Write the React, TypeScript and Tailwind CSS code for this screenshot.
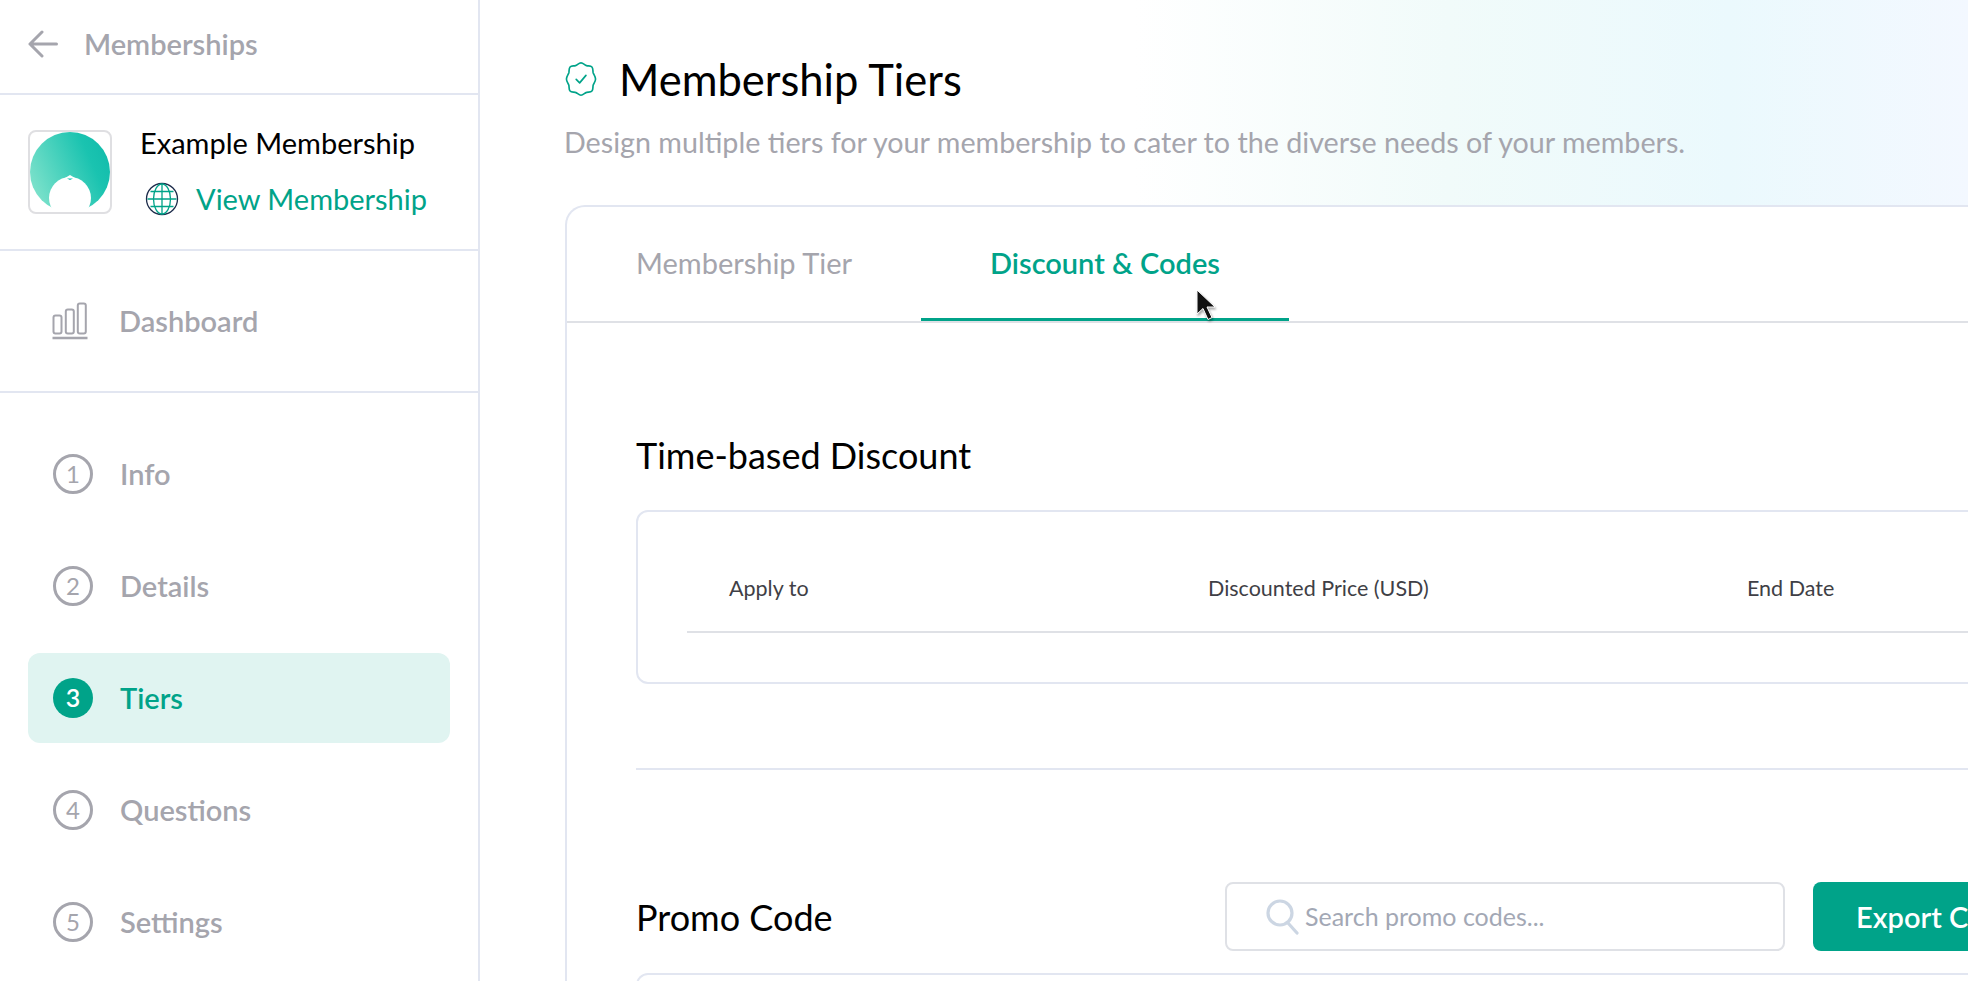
import React from "react";

const steps = [
  { n: 1, label: "Info" },
  { n: 2, label: "Details" },
  { n: 3, label: "Tiers", active: true },
  { n: 4, label: "Questions" },
  { n: 5, label: "Settings" },
];

function Logo() {
  return (
    <div className="w-[84px] h-[84px] rounded-[8px] border-2 border-[#dfdfe2] overflow-hidden shrink-0 bg-white">
      <svg viewBox="0 0 80 80" width="80" height="80">
        <defs>
          <linearGradient id="lg" x1="0" y1="0.8" x2="1" y2="0.35">
            <stop offset="0" stopColor="#84e4cd" />
            <stop offset="0.8" stopColor="#1ac3b0" />
            <stop offset="1" stopColor="#13bdac" />
          </linearGradient>
        </defs>
        <circle cx="40" cy="40" r="40" fill="url(#lg)" />
        <circle cx="40" cy="66" r="21" fill="#fff" />
        <path d="M35 46 L40 43 L45 46 Z" fill="#fff" />
        <path d="M37 46.500 H43 L40 48 Z" fill="#17c1af" />
      </svg>
    </div>
  );
}

function Globe() {
  return (
    <svg width="34" height="34" viewBox="0 0 34 34" fill="none" className="shrink-0">
      <circle cx="17" cy="17" r="15.500" stroke="#1c2b4a" strokeWidth="1.300" />
      <ellipse cx="17" cy="17" rx="8.500" ry="15" stroke="#00a389" strokeWidth="1.300" />
      <path d="M17 2v30M2.500 17h29M5.500 9.500h23M5.500 24.500h23" stroke="#00a389" strokeWidth="1.300" />
    </svg>
  );
}

function Bars() {
  return (
    <svg width="36" height="38" viewBox="0 0 36 38" fill="none" stroke="#a5a5ad" strokeWidth="2" className="shrink-0">
      <rect x="1.500" y="13.500" width="8" height="18" rx="2" />
      <rect x="13.800" y="7.500" width="8" height="24" rx="2" />
      <rect x="25.800" y="1.500" width="8" height="30" rx="2" />
      <path d="M0.500 36h35" strokeWidth="2.400" />
    </svg>
  );
}

function Badge() {
  return (
    <svg width="36" height="36" viewBox="0 0 24 24" fill="none" stroke="#00a389" strokeWidth="1.100" strokeLinejoin="round" strokeLinecap="round" className="shrink-0">
      <path d="M12 1.200c1.500 0 2.400 1.500 3.700 1.900 1.200.4 2.700-.1 3.600.9.900 1 .5 2.500.8 3.800.4 1.300 1.600 2.500 1.600 4.200s-1.200 2.900-1.600 4.200c-.3 1.300.1 2.800-.8 3.800-.9 1-2.400.5-3.600.9-1.300.4-2.200 1.900-3.700 1.900s-2.400-1.500-3.700-1.900c-1.200-.4-2.700.1-3.600-.9-.9-1-.5-2.500-.8-3.800C3.500 14.900 2.300 13.700 2.300 12s1.200-2.900 1.600-4.200c.3-1.300-.1-2.800.8-3.800.9-1 2.400-.5 3.600-.9C9.600 2.700 10.500 1.200 12 1.200z" />
      <path d="M8.800 12.300l2.300 2.300 4.200-5" />
    </svg>
  );
}

function BackArrow() {
  return (
    <svg width="30" height="28" viewBox="0 0 30 28" fill="none" stroke="#a5a5ad" strokeWidth="3" strokeLinecap="round" strokeLinejoin="round" className="shrink-0">
      <path d="M28.500 14H2M14 2L2 14l12 12" />
    </svg>
  );
}

function SearchGlyph() {
  return (
    <svg width="33" height="36" viewBox="0 0 33 36" fill="none" stroke="#ccd6e3" strokeWidth="3.200" strokeLinecap="round" className="shrink-0">
      <circle cx="14" cy="14" r="12" />
      <path d="M22 24l9 10" />
    </svg>
  );
}

function Cursor() {
  return (
    <svg width="24" height="36" viewBox="0 0 24 36" className="absolute left-[1195px] top-[289px] z-10 drop-shadow-[1px_2px_1px_rgba(0,0,0,0.35)]">
      <path d="M2 1v24l6-5.500 5 11 4-2-5-10.500h8z" fill="#111" stroke="#fff" strokeWidth="1" />
    </svg>
  );
}

export default function App() {
  return (
    <div className="relative flex h-[981px] w-[1968px] overflow-hidden bg-white font-['Lato',sans-serif]">
      <aside className="w-[480px] shrink-0 border-r-2 border-[#e2e6f1] flex flex-col">
        <div className="h-[95px] shrink-0 border-b-2 border-[#e2e6f1] flex items-center pl-[28px] gap-[26px] pb-[5px] text-[#a5a5ad]">
          <BackArrow />
          <span className="text-[29px] font-semibold">Memberships</span>
        </div>
        <div className="h-[156px] shrink-0 border-b-2 border-[#e2e6f1] flex items-center pl-[28px] gap-[28px]">
          <Logo />
          <div className="flex flex-col gap-[16px] -mt-[2px]">
            <span className="text-[29px] leading-[40px] text-black">Example Membership</span>
            <div className="flex items-center gap-[17px] pl-[5px]">
              <Globe />
              <span className="text-[29px] leading-[40px] text-[#00a389]">View Membership</span>
            </div>
          </div>
        </div>
        <div className="h-[142px] shrink-0 border-b-2 border-[#e2e6f1] flex items-center pl-[52px] gap-[31px]">
          <Bars />
          <span className="text-[29px] font-semibold text-[#a5a5ad]">Dashboard</span>
        </div>
        <nav className="flex flex-col pt-[36px] pl-[28px] pr-[28px] gap-[22px]">
          {steps.map((s) =>
            s.active ? (
              <div key={s.n} className="h-[90px] rounded-[12px] bg-[#e0f4f1] flex items-center pl-[25px] gap-[27px]">
                <span className="w-[40px] h-[40px] rounded-full bg-[#00a389] text-white flex items-center justify-center text-[25px] font-semibold">{s.n}</span>
                <span className="text-[29px] font-semibold text-[#00a389]">{s.label}</span>
              </div>
            ) : (
              <div key={s.n} className="h-[90px] flex items-center pl-[25px] gap-[27px]">
                <span className="w-[40px] h-[40px] rounded-full border-[3px] border-[#a5a5ad] text-[#a5a5ad] flex items-center justify-center text-[24px]">{s.n}</span>
                <span className="text-[29px] font-semibold text-[#a5a5ad]">{s.label}</span>
              </div>
            )
          )}
        </nav>
      </aside>

      <main className="flex-1 min-w-0 overflow-hidden flex flex-col bg-[linear-gradient(90deg,#ffffff_0%,#ffffff_44%,#f1fbfa_65%,#ebf9fd_84%,#f3f8ff_100%)]">
        <header className="h-[205px] shrink-0 pl-[83px]">
          <div className="flex items-center gap-[20px] pt-[54px]">
            <Badge />
            <h1 className="text-[43.500px] leading-[50px] font-normal text-black">Membership Tiers</h1>
          </div>
          <p className="mt-[21px] ml-[1px] text-[28.700px] leading-[34px] text-[#a5a5ad] whitespace-nowrap">Design multiple tiers for your membership to cater to the diverse needs of your members.</p>
        </header>

        <section className="flex-1 ml-[85px] w-[1600px] bg-white border-2 border-b-0 border-[#e2e6f1] rounded-t-[20px]">
          <div className="h-[116px] border-b-2 border-[#dfe1e6] flex pl-[69px]">
            <div className="w-[285px] flex items-center pb-[2px] text-[29px] text-[#a5a5ad]">Membership Tier</div>
            <div className="w-[368px] flex items-center justify-center border-b-[3px] border-[#00a389] text-[29px] font-semibold text-[#00a389]">Discount &amp; Codes</div>
          </div>

          <div className="pl-[69px] pr-[40px]">
            <h2 className="mt-[110px] text-[36px] leading-[44px] font-normal text-black">Time-based Discount</h2>
            <div className="mt-[33px] h-[174px] rounded-[12px] border-2 border-[#e2e6f1] pl-[49px] pt-[60px]">
              <div className="h-[61px] border-b-2 border-[#dfe1e6] grid grid-cols-[479px_539px_1fr] pl-[42px] text-[21.500px] text-[#3f3f46]">
                <span>Apply to</span>
                <span>Discounted Price (USD)</span>
                <span>End Date</span>
              </div>
            </div>
            <div className="mt-[84px] border-t-2 border-[#e2e6f1]" />
            <div className="mt-[112px] flex items-center justify-between">
              <h2 className="text-[36px] leading-[44px] font-normal text-black">Promo Code</h2>
              <div className="flex items-center gap-[28px]">
                <div className="w-[560px] h-[69px] rounded-[8px] border-2 border-[#dfe1e6] flex items-center pl-[39px] gap-[6px]">
                  <SearchGlyph />
                  <span className="text-[25px] text-[#a3a8b5]">Search promo codes...</span>
                </div>
                <div className="w-[310px] h-[69px] rounded-[8px] bg-[#00a389] flex items-center pl-[43px] text-[29px] font-semibold text-white whitespace-nowrap">Export Codes</div>
              </div>
            </div>
            <div className="mt-[22px] h-[40px] rounded-t-[12px] border-2 border-b-0 border-[#e2e6f1]" />
          </div>
        </section>
      </main>
      <Cursor />
    </div>
  );
}
